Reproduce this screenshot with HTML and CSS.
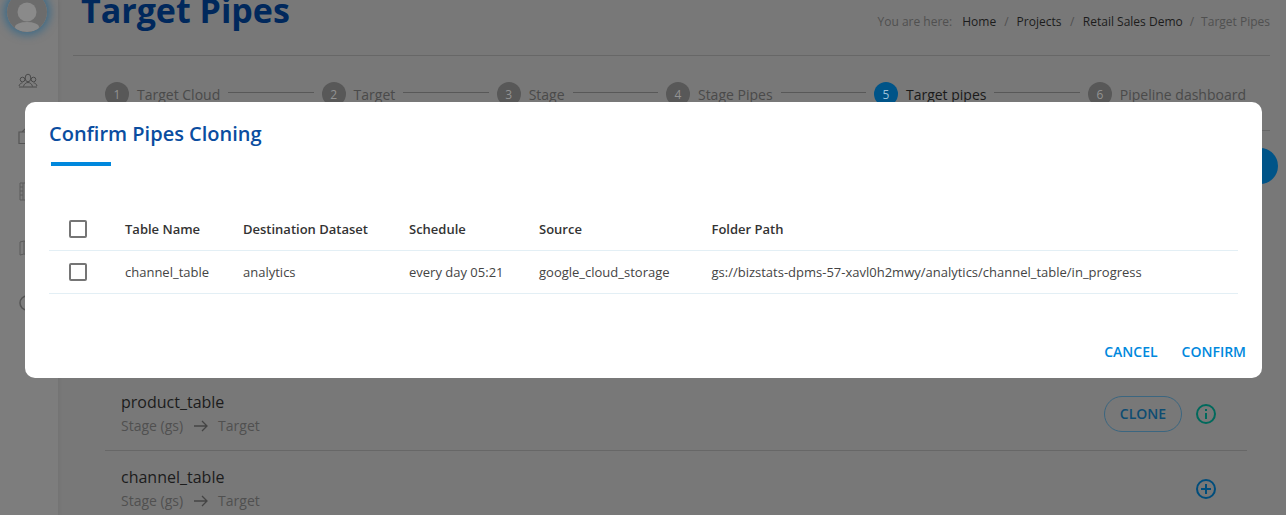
FILE: index.html
```html
<!DOCTYPE html>
<html lang="en">
<head>
<meta charset="utf-8">
<title>Target Pipes</title>
<link rel="stylesheet" href="styles.css">
</head>
<body>
<div class="app">
  <aside class="sidebar">
    <div class="avatar">
      <svg viewBox="0 0 40 40" width="40" height="40"><circle cx="20" cy="20" r="20" fill="#6c6c6c"/><circle cx="20" cy="20" r="9.500" fill="#8a8a8a"/><ellipse cx="20" cy="35" rx="12" ry="5" fill="#8a8a8a"/></svg>
    </div>
    <nav class="side-icons">
      <svg class="side-icon people" viewBox="0 0 20 20" width="20" height="20" fill="none" stroke="#4a4a4a" stroke-width="1"><ellipse cx="10" cy="7" rx="2.800" ry="3.800"/><circle cx="4.500" cy="8.500" r="2.300"/><circle cx="15.500" cy="8.500" r="2.300"/><path d="M1 15c.5-2 2-3 3.500-3.200M19 15c-.5-2-2-3-3.500-3.200M5.500 15.500c.5-2.500 2.500-4 4.500-4s4 1.500 4.500 4M1 16h18"/></svg>
      <svg class="side-icon clip" viewBox="0 0 20 16" width="20" height="16" fill="none" stroke="#555" stroke-width="1.200"><path d="M1 4h18v11.500H1zM4 4l3-3h6l3 3"/></svg>
      <svg class="side-icon book" viewBox="0 0 20 28" width="20" height="28" fill="none" stroke="#5c5c5c" stroke-width="1"><path d="M2 10h16v17H2zM5 10v17M2 14h3M2 18h3M2 22h3"/></svg>
      <svg class="side-icon map" viewBox="0 0 20 17" width="20" height="17" fill="none" stroke="#5c5c5c" stroke-width="1"><path d="M2 2l4-1 6 2 6-2v13l-6 2-6-2-4 1zM6 1v13M12 3v13"/></svg>
      <svg class="side-icon ring" viewBox="0 0 20 16" width="20" height="16" fill="none" stroke="#555" stroke-width="1.500"><circle cx="9" cy="8" r="7"/></svg>
    </nav>
  </aside>
  <main class="main">
    <header class="page-head">
      <h1 class="page-title">Target Pipes</h1>
      <div class="crumbs">
        <span class="crumb-label">You are here:</span>
        <a class="crumb">Home</a><span class="sep mid">/</span>
        <a class="crumb">Projects</a><span class="sep wide">/</span>
        <a class="crumb">Retail Sales Demo</a><span class="sep">/</span>
        <span class="crumb-current">Target Pipes</span>
      </div>
    </header>
    <ol class="stepper">
      <li class="step"><span class="dot">1</span><span class="step-name">Target Cloud</span></li>
      <li class="line"></li>
      <li class="step"><span class="dot">2</span><span class="step-name">Target</span></li>
      <li class="line"></li>
      <li class="step"><span class="dot">3</span><span class="step-name">Stage</span></li>
      <li class="line"></li>
      <li class="step"><span class="dot">4</span><span class="step-name">Stage Pipes</span></li>
      <li class="line"></li>
      <li class="step active"><span class="dot">5</span><span class="step-name">Target pipes</span></li>
      <li class="line"></li>
      <li class="step"><span class="dot">6</span><span class="step-name">Pipeline dashboard</span></li>
    </ol>
    <div class="toolbar"><span class="fab"></span></div>
    <section class="pipes">
      <div class="pipe">
        <div class="pipe-text">
          <div class="pipe-name">product_table</div>
          <div class="pipe-route">Stage (gs)<svg class="arrow" viewBox="0 0 15 16" width="15" height="16" fill="none" stroke="#444" stroke-width="1.300"><path d="M1 8h13M9 3l5 5-5 5"/></svg>Target</div>
        </div>
        <button class="clone">CLONE</button>
        <svg class="round-icon" viewBox="0 0 22 22" width="22" height="22" fill="none" stroke="#00695c" stroke-width="2"><circle cx="11" cy="11" r="9"/><path d="M11 10v6M11 6v2"/></svg>
      </div>
      <div class="pipe">
        <div class="pipe-text">
          <div class="pipe-name">channel_table</div>
          <div class="pipe-route">Stage (gs)<svg class="arrow" viewBox="0 0 15 16" width="15" height="16" fill="none" stroke="#444" stroke-width="1.300"><path d="M1 8h13M9 3l5 5-5 5"/></svg>Target</div>
        </div>
        <svg class="round-icon" viewBox="0 0 22 22" width="22" height="22" fill="none" stroke="#004d7c" stroke-width="2"><circle cx="11" cy="11" r="9"/><path d="M11 6v10M6 11h10"/></svg>
      </div>
    </section>
  </main>
</div>

<div class="modal">
  <h2 class="modal-title">Confirm Pipes Cloning</h2>
  <div class="title-bar"></div>
  <table class="clone-table">
    <thead>
      <tr>
        <th class="col-check"><span class="checkbox"></span></th>
        <th class="col-name">Table Name</th>
        <th class="col-dest">Destination Dataset</th>
        <th class="col-sched">Schedule</th>
        <th class="col-src">Source</th>
        <th>Folder Path</th>
      </tr>
    </thead>
    <tbody>
      <tr>
        <td class="col-check"><span class="checkbox"></span></td>
        <td>channel_table</td>
        <td>analytics</td>
        <td>every day 05:21</td>
        <td>google_cloud_storage</td>
        <td>gs://bizstats-dpms-57-xavl0h2mwy/analytics/channel_table/in_progress</td>
      </tr>
    </tbody>
  </table>
  <div class="actions">
    <button class="action">CANCEL</button>
    <button class="action">CONFIRM</button>
  </div>
</div>
</body>
</html>
```
FILE: styles.css
```css
* { box-sizing: border-box; }
html, body { margin: 0; height: 515px; overflow: hidden; }
body { font-family: "Open Sans", "Noto Sans", sans-serif; background: #787878; color: #333; position: relative; }

.app { display: flex; height: 515px; overflow: hidden; }

.sidebar {
  width: 58px;
  flex: none;
  background: #7d7d7d;
  box-shadow: 1px 0 4px rgba(0, 0, 0, .06);
  display: flex;
  flex-direction: column;
  align-items: center;
  padding-right: 2px;
}
.avatar { width: 40px; height: 40px; border-radius: 50%; box-shadow: 0 0 9px 3px rgba(0, 90, 145, .5); flex: none; margin: -8px 2px 0 0; }
.avatar svg { display: block; border-radius: 50%; }
.side-icons { display: flex; flex-direction: column; align-items: center; margin-top: 39px; }
.side-icon { display: block; }
.clip { margin-top: 37px; }
.book { margin-top: 29px; }
.map { margin-top: 39px; }
.ring { margin-top: 38px; }

.main { flex: 1; min-width: 0; padding: 0 16px 0 15px; }
.page-head {
  display: flex;
  justify-content: space-between;
  align-items: flex-start;
  height: 68px;
  border-bottom: 1px solid #676767;
  margin-top: -12px;
  padding-left: 8px;
}
.page-title { margin: 0; font-size: 34px; line-height: 45px; font-weight: 700; color: #00285c; }
.crumbs { display: flex; align-items: center; font-size: 12px; line-height: 16px; margin-top: 26px; }
.crumb-label { color: #505050; margin-right: 10px; }
.crumb { color: #1c1c1c; }
.sep { color: #505050; margin: 0 7px; }
.sep.mid { margin: 0 8px; }
.sep.wide { margin: 0 8.500px; }
.crumb-current { color: #505050; }

.stepper {
  list-style: none;
  margin: 26px 0 0;
  padding: 0 24px 0 32px;
  height: 48px;
  display: flex;
  align-items: flex-start;
  gap: 8px;
}
.step { display: flex; align-items: flex-start; gap: 8px; font-size: 14px; line-height: 24px; white-space: nowrap; color: #4a4a4a; }
.step-name { padding-top: 1px; }
.dot { width: 24px; height: 24px; border-radius: 50%; padding-top: 1px; background: #585858; color: #939393; font-size: 12px; text-align: center; }
.step.active { color: #1a1a1a; }
.step.active .dot { background: #005488; color: #9cc0d8; }
.line { flex: 1; height: 1px; background: #585858; margin-top: 10px; }

.toolbar { height: 246px; border-top: 1px solid #676767; position: relative; }
.fab { position: absolute; right: -8px; top: 17px; width: 36px; height: 36px; border-radius: 50%; background: #005488; }

.pipes { margin: 0 23px 0 32px; }
.pipe { display: flex; align-items: center; padding: 15px 30px 14px 16px; gap: 13px; border-bottom: 1px solid #676767; }
.pipe + .pipe { border-bottom: 0; }
.pipe-text { flex: 1; }
.pipe-name { font-size: 16px; line-height: 22px; color: #1c1c1c; }
.pipe-route { font-size: 14px; line-height: 20px; margin-top: 3px; color: #505050; display: flex; align-items: center; gap: 10px; }
.arrow { display: block; }
.clone { height: 36px; width: 78px; border: 1px solid #3b6680; border-radius: 18px; background: transparent; color: #0d4c72; font: 600 14px "Open Sans", sans-serif; padding: 0 0 1px; }
.round-icon { display: block; flex: none; }

.modal {
  position: absolute;
  left: 25px;
  top: 102px;
  width: 1237px;
  height: 276px;
  background: #fff;
  border-radius: 10px;
  padding: 18px 24px 0;
  display: flex;
  flex-direction: column;
}
.modal-title { margin: 0; font-size: 20px; line-height: 28px; font-weight: 600; color: #0a4da0; }
.title-bar { width: 60px; height: 4px; background: #0088dd; margin: 14px 0 0 2px; }
.clone-table { border-collapse: collapse; margin-top: 41px; width: 1189px; table-layout: fixed; font-size: 13px; color: #444; }
.clone-table th { height: 43px; text-align: left; font-weight: 600; color: #333; padding: 1px 0 0; border-bottom: 1px solid #e3eff5; }
.clone-table td { height: 43px; padding: 0; border-bottom: 1px solid #e3eff5; white-space: nowrap; }
.clone-table .col-check { width: 76px; padding-left: 20px; }
.col-name { width: 118px; }
.col-dest { width: 166px; }
.col-sched { width: 130px; }
.col-src { width: 172.500px; }
.checkbox { display: block; width: 18px; height: 18px; border: 2px solid #757575; border-radius: 2px; }
.actions { display: flex; justify-content: flex-end; gap: 24px; margin: auto -8px 16px 0; }
.action { border: 0; background: none; padding: 0; font: 600 14px/20px "Open Sans", sans-serif; color: #0088dd; }
```
